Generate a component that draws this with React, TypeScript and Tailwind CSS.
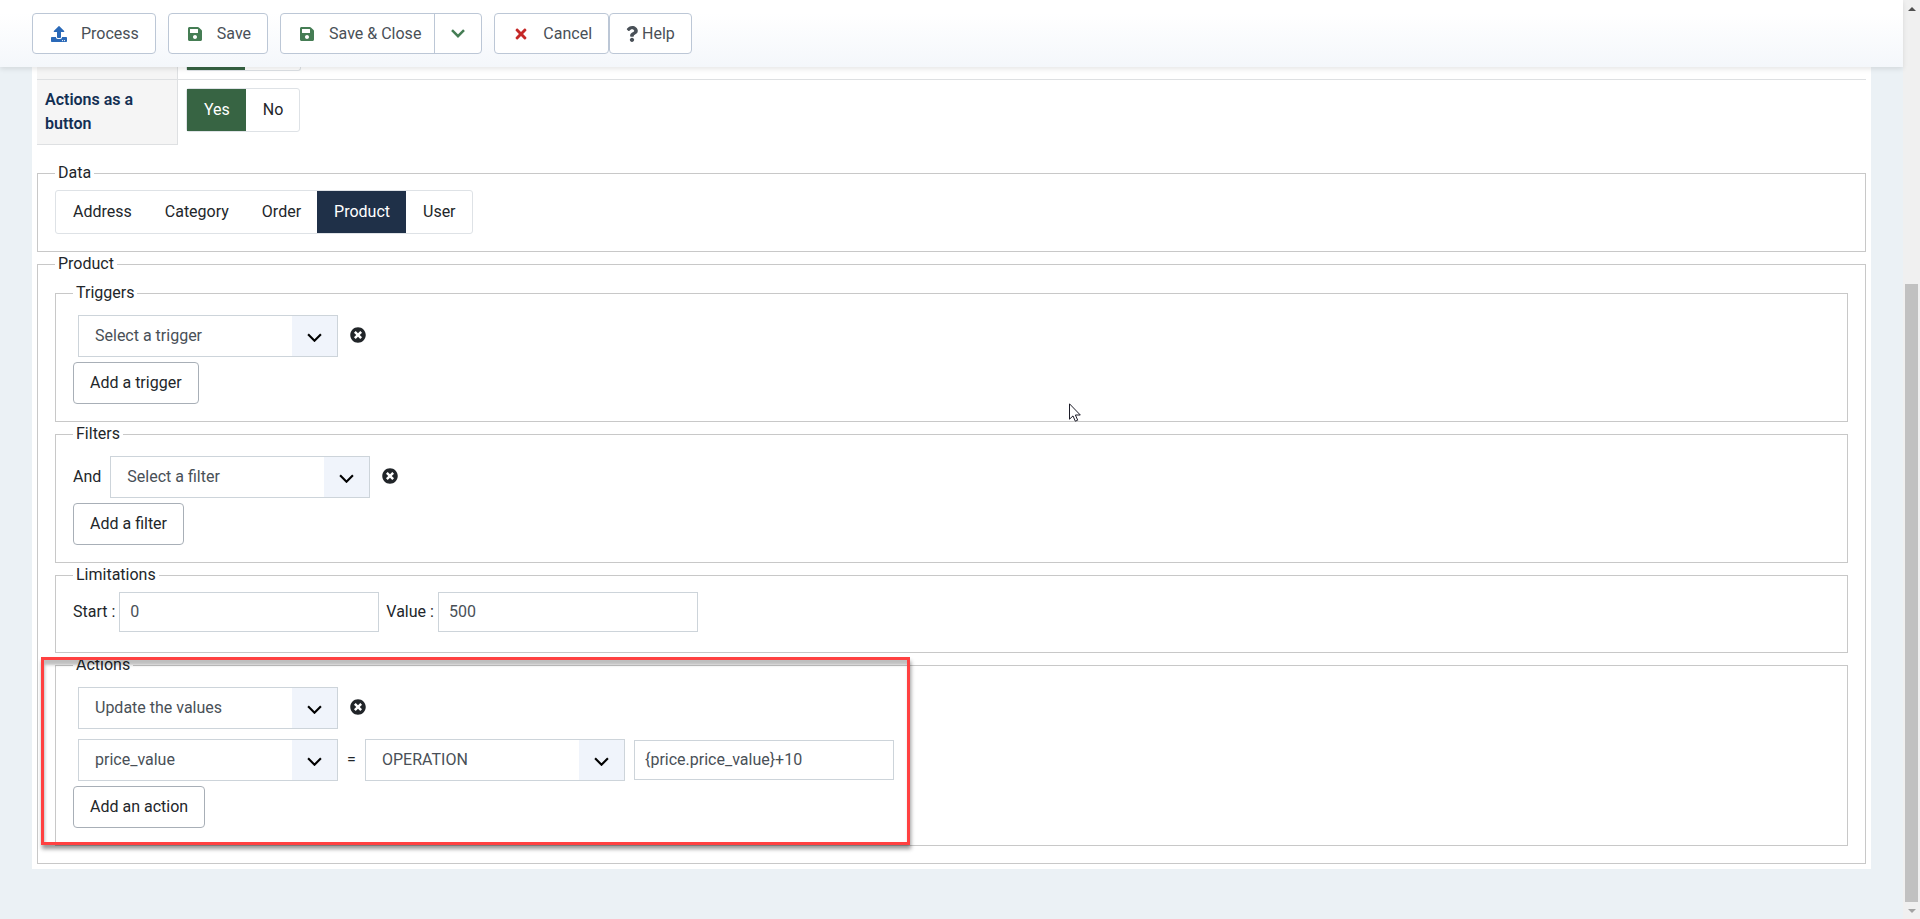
import type { ReactNode } from "react";
import { FaQuestion, FaSave, FaTimes, FaTimesCircle, FaUpload } from "react-icons/fa";

const tabs = ["Address", "Category", "Order", "Product", "User"];

function Chevron({ className }: { className: string }) {
  return (
    <svg viewBox="0 0 14 9" className={className} fill="none" stroke="currentColor" aria-hidden>
      <path d="M1 1.2 7 7.2l6-6" />
    </svg>
  );
}

function ToolbarButton({ icon, children }: { icon: ReactNode; children: ReactNode }) {
  return (
    <button
      type="button"
      className="flex h-[41px] items-center gap-3 rounded border border-[#bcc7d6] bg-white px-4 text-[#495057]"
    >
      <span className="flex w-5 justify-center">{icon}</span>
      {children}
    </button>
  );
}

function Fieldset({ title, children }: { title: string; children: ReactNode }) {
  return (
    <fieldset className="min-w-0 border border-[#c8c8c8] px-[17px] pt-1 pb-[17px]">
      <legend className="h-[25px] px-[3px] leading-6">{title}</legend>
      {children}
    </fieldset>
  );
}

function Row({ children }: { children: ReactNode }) {
  return <div className="flex items-center py-[5px]">{children}</div>;
}

function Select({ label, value }: { label: string; value: string }) {
  return (
    <div className="relative w-[260px]">
      <select
        aria-label={label}
        defaultValue={value}
        className="h-[42px] w-full appearance-none border border-[#cdd4da] bg-white pr-12 pl-4 text-[#495057]"
      >
        <option>{value}</option>
      </select>
      <span className="pointer-events-none absolute inset-y-px right-px flex w-[45px] items-center justify-center bg-[#f0f4fb] text-black">
        <Chevron className="mt-[3px] w-[15px] stroke-2" />
      </span>
    </div>
  );
}

function TextInput({ id, label, value }: { id: string; label?: string; value: string }) {
  return (
    <input
      id={id}
      type="text"
      aria-label={label}
      defaultValue={value}
      className="h-10 w-[260px] border border-[#cdd4da] bg-white px-[10px] pb-[2px] text-[#495057]"
    />
  );
}

function RemoveButton({ label }: { label: string }) {
  return (
    <button type="button" aria-label={label} className="mb-[2px] ml-3 text-[#212529]">
      <FaTimesCircle className="size-4" />
    </button>
  );
}

function AddButton({ children }: { children: ReactNode }) {
  return (
    <button type="button" className="block h-[42px] rounded border border-[#a8afb7] bg-white px-4 text-[#22262a]">
      {children}
    </button>
  );
}

function RadioGroup({
  name,
  options,
  selected,
  activeClass,
}: {
  name: string;
  options: string[];
  selected: string;
  activeClass: string;
}) {
  return (
    <div role="radiogroup" aria-label={name} className="flex w-fit rounded-[3px] border border-[#dee2e6] bg-white">
      {options.map((option) => (
        <label
          key={option}
          className={`relative flex h-[42px] items-center pr-4 pl-[17px] ${option === selected ? activeClass : ""}`}
        >
          <input type="radio" name={name} defaultChecked={option === selected} className="sr-only" />
          {option}
        </label>
      ))}
    </div>
  );
}

function Scrollbar() {
  return (
    <div aria-hidden className="flex w-[17px] shrink-0 flex-col bg-[#f0f0f0]">
      <div className="flex h-[17px] items-center justify-center">
        <svg viewBox="0 0 8 4" className="w-2 fill-[#505050]">
          <path d="M0 4 4 0l4 4z" />
        </svg>
      </div>
      <div className="grow-[267]" />
      <div className="mx-[2px] grow-[618] bg-[#c1c1c1]" />
      <div className="flex h-[17px] items-center justify-center">
        <svg viewBox="0 0 8 4" className="w-2 fill-[#a3a3a3]">
          <path d="M0 0l4 4 4-4z" />
        </svg>
      </div>
    </div>
  );
}

export default function App() {
  return (
    <div className="relative flex min-h-screen bg-[#ebf1f5] font-[Roboto,sans-serif] text-base leading-6 text-[#22262a]">
      <div className="min-w-0 flex-1">
        <header className="relative z-10 flex h-[67px] bg-linear-to-b from-white from-20% to-[#f4f7fb] px-8 pt-[13px] shadow-[0_2px_5px_rgba(0,0,0,0.1)]">
          <div className="flex h-[41px] gap-3">
            <ToolbarButton icon={<FaUpload className="size-4 text-[#2a69b8]" />}>Process</ToolbarButton>
            <ToolbarButton icon={<FaSave className="size-4 text-[#457d54]" />}>Save</ToolbarButton>
            <div className="flex rounded border border-[#bcc7d6] bg-white text-[#495057]">
              <button type="button" className="flex items-center gap-3 pr-[13px] pl-4">
                <span className="flex w-5 justify-center">
                  <FaSave className="size-4 text-[#457d54]" />
                </span>
                Save &amp; Close
              </button>
              <button
                type="button"
                aria-label="More save options"
                className="flex w-[47px] items-center justify-center border-l border-[#bcc7d6] text-[#457d54]"
              >
                <Chevron className="w-[14px] stroke-[2.5]" />
              </button>
            </div>
            <div className="flex">
              <ToolbarButton icon={<FaTimes className="size-4 text-[#c52827]" />}>Cancel</ToolbarButton>
              <button
                type="button"
                className="flex items-center gap-1 rounded border border-[#bcc7d6] bg-white px-4 text-[#495057]"
              >
                <FaQuestion className="h-4 w-3" />
                Help
              </button>
            </div>
          </div>
        </header>

        <main className="mx-8 bg-white px-[5px] pb-[5px]">
          <table className="mb-4 w-full border-separate border-spacing-0">
            <tbody>
              {/* tail of the row that is scrolled under the toolbar */}
              <tr>
                <td className="w-[141px] border-r border-b border-[#dee0e2] bg-[#f5f5f5]" />
                <td className="border-b border-[#dee0e2] px-2 pb-2">
                  <div className="flex h-1 w-[115px] rounded-b-[3px] border border-t-0 border-[#dee2e6]">
                    <span className="w-[58px] bg-[#376443]" />
                  </div>
                </td>
              </tr>
              <tr>
                <th
                  scope="row"
                  className="border-r border-b border-[#dee0e2] bg-[#f5f5f5] p-2 text-left font-semibold text-[#132f53]"
                >
                  Actions as a button
                </th>
                <td className="p-2 align-top">
                  <RadioGroup
                    name="Actions as a button"
                    options={["Yes", "No"]}
                    selected="Yes"
                    activeClass="bg-[#376443] text-white"
                  />
                </td>
              </tr>
            </tbody>
          </table>

          <Fieldset title="Data">
            <RadioGroup name="Data" options={tabs} selected="Product" activeClass="bg-[#1f3048] text-white" />
          </Fieldset>

          <Fieldset title="Product">
            <Fieldset title="Triggers">
              <Row>
                <div className="ml-[5px]">
                  <Select label="Trigger" value="Select a trigger" />
                </div>
                <RemoveButton label="Remove trigger" />
              </Row>
              <AddButton>Add a trigger</AddButton>
            </Fieldset>

            <Fieldset title="Filters">
              <Row>
                <span className="mr-[9px]">And</span>
                <Select label="Filter" value="Select a filter" />
                <RemoveButton label="Remove filter" />
              </Row>
              <AddButton>Add a filter</AddButton>
            </Fieldset>

            <Fieldset title="Limitations">
              <div className="mb-[3px] flex items-center gap-[7px]">
                <div className="flex items-center gap-1">
                  <label htmlFor="start">Start :</label>
                  <TextInput id="start" value="0" />
                </div>
                <div className="flex items-center gap-1">
                  <label htmlFor="value">Value :</label>
                  <TextInput id="value" value="500" />
                </div>
              </div>
            </Fieldset>

            <div className="relative">
              <Fieldset title="Actions">
                <Row>
                  <div className="ml-[5px]">
                    <Select label="Action" value="Update the values" />
                  </div>
                  <RemoveButton label="Remove action" />
                </Row>
                <Row>
                  <div className="ml-[5px]">
                    <Select label="Column" value="price_value" />
                  </div>
                  <span className="w-[27px] text-center">=</span>
                  <Select label="Operator" value="OPERATION" />
                  <div className="ml-[9px]">
                    <TextInput id="operation" label="Operation" value="{price.price_value}+10" />
                  </div>
                </Row>
                <AddButton>Add an action</AddButton>
              </Fieldset>
              <div className="pointer-events-none absolute top-1 bottom-px -left-[14px] w-[869px] border-3 border-[#ff4141] shadow-[1px_4px_4px_rgba(0,0,0,0.4),inset_1px_5px_3px_rgba(0,0,0,0.25)]" />
            </div>
          </Fieldset>
        </main>
      </div>

      <Scrollbar />

      {/* mouse pointer */}
      <svg
        viewBox="0 0 12 19"
        className="pointer-events-none absolute top-[403px] left-[1069px] w-3"
        fill="white"
        stroke="#1c1c28"
        aria-hidden
      >
        <path d="M.5.8v15.4l3.5-3.3 2.3 5.3 2.4-1-2.3-5.2h4.9z" />
      </svg>
    </div>
  );
}
